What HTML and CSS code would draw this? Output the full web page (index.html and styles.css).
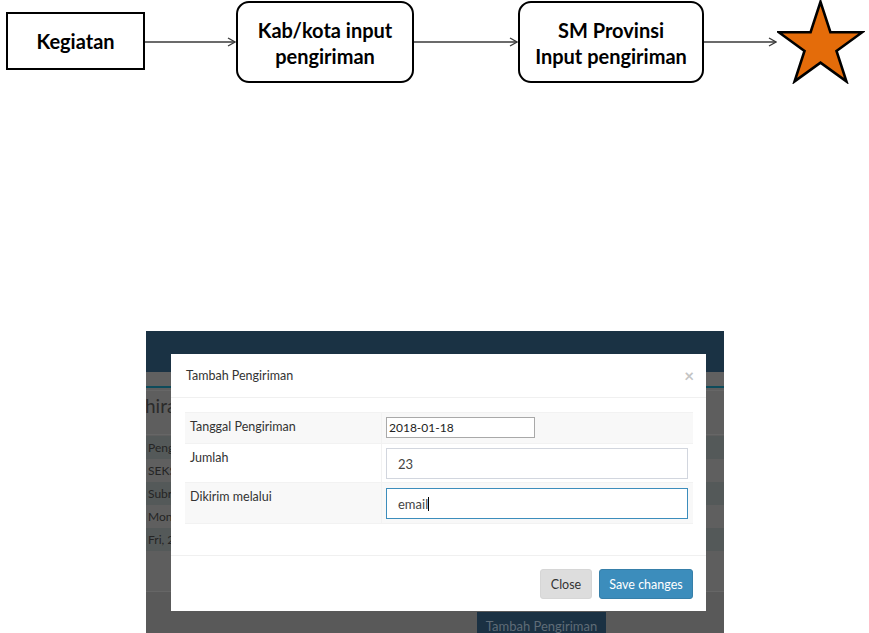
FILE: index.html
```html
<!DOCTYPE html>
<html>
<head>
<meta charset="utf-8">
<link rel="stylesheet" href="styles.css">
</head>
<body>
<div class="flow">
  <div class="box box-sq">Kegiatan</div>
  <svg class="arrow a1" width="91" height="12" viewBox="0 0 91 12"><line x1="0" y1="6" x2="90" y2="6"/><polyline points="83,2 90,6 83,10"/></svg>
  <div class="box box-rd b2">Kab/kota input<br>pengiriman</div>
  <svg class="arrow a2" width="104" height="12" viewBox="0 0 104 12"><line x1="0" y1="6" x2="103" y2="6"/><polyline points="96,2 103,6 96,10"/></svg>
  <div class="box box-rd b3">SM Provinsi<br>Input pengiriman</div>
  <svg class="arrow a3" width="73" height="12" viewBox="0 0 73 12"><line x1="0" y1="6" x2="72" y2="6"/><polyline points="65,2 72,6 65,10"/></svg>
  <svg class="star" width="88" height="84" viewBox="0 0 88 84"><polygon points="43.5,1.8 53.4,32.2 85.3,32.2 59.5,51 69.4,81.4 43.5,62.6 17.6,81.4 27.5,51 1.7,32.2 33.6,32.2"/></svg>
</div>

<div class="screen">
  <div class="navbar"></div>
  <div class="subbar"></div>
  <div class="tealline"></div>
  <div class="page-head"><span class="page-title">hiran</span></div>
  <div class="bg-table">
    <div class="bg-row odd">Peng</div>
    <div class="bg-row">SEKS</div>
    <div class="bg-row odd">Subr</div>
    <div class="bg-row">Mon,</div>
    <div class="bg-row odd">Fri, 2</div>
  </div>
  <div class="bg-spacer"></div>
  <div class="bg-actions"><span class="bg-btn">Tambah Pengiriman</span></div>

  <div class="modal">
    <div class="modal-header">
      <span class="modal-title">Tambah Pengiriman</span>
      <span class="modal-close">×</span>
    </div>
    <div class="modal-body">
      <table class="form-table">
        <tr class="r1">
          <td class="lbl">Tanggal Pengiriman</td>
          <td class="val"><input class="date-input" type="text" value="2018-01-18"></td>
        </tr>
        <tr class="r2">
          <td class="lbl">Jumlah</td>
          <td class="val"><div class="fc">23</div></td>
        </tr>
        <tr class="r3">
          <td class="lbl">Dikirim melalui</td>
          <td class="val"><div class="fc focus">email<span class="caret"></span></div></td>
        </tr>
      </table>
    </div>
    <div class="modal-footer">
      <span class="btn btn-default">Close</span>
      <span class="btn btn-primary">Save changes</span>
    </div>
  </div>
</div>
</body>
</html>
```

FILE: styles.css
```css
* { box-sizing: border-box; }
html, body { margin: 0; padding: 0; background: #fff; }
body { font-family: Lato, "Open Sans", sans-serif; width: 869px; height: 633px; overflow: hidden; }

.flow {
  display: flex;
  align-items: center;
  height: 84px;
  padding-left: 6px;
}
.box {
  display: flex;
  align-items: center;
  justify-content: center;
  text-align: center;
  font-family: Lato, sans-serif;
  font-weight: 700;
  font-size: 20px;
  line-height: 26px;
  color: #000;
  background: #fff;
  border: 2.5px solid #000;
  flex: none;
}
.box-sq { width: 139px; height: 58px; margin-top: -2px; }
.box-rd { height: 82px; border-radius: 13px; padding-top: 1px; }
.b2 { width: 178px; }
.b3 { width: 186px; }
.arrow { flex: none; display: block; }
.arrow line, .arrow polyline { stroke: #3a3a3a; stroke-width: 1.3; fill: none; }
.star { flex: none; display: block; }
.star polygon { fill: #E46C0A; stroke: #000; stroke-width: 2.6; stroke-linejoin: miter; }

.screen {
  position: relative;
  margin-left: 146px;
  margin-top: 247px;
  width: 578px;
  height: 302px;
  background: #5e5e5e;
  overflow: hidden;
}
.navbar { height: 41px; background: #1a3244; }
.subbar { height: 14px; background: #606060; }
.tealline { height: 2px; background: #0d4b5b; }
.page-head {
  height: 45px;
  padding-top: 4px;
  border-top: 1px solid #666;
  border-bottom: 1px solid #666;
  margin-top: 2px;
}
.page-title {
  display: block;
  margin-left: -1px;
  font-size: 19px;
  color: #2a2a2a;
  line-height: 22px;
}
.bg-table { margin-top: 1px; }
.bg-row {
  height: 23px;
  line-height: 23px;
  padding-left: 2px;
  font-size: 12px;
  color: #242424;
  background: #5f5f5f;
}
.bg-row.odd { background: #545959; }
.bg-spacer { height: 41px; border-bottom: 1px solid #666; }
.bg-actions {
  padding-top: 20px;
  padding-left: 331px;
  background: #595959;
  height: 60px;
}
.bg-btn {
  display: inline-block;
  width: 129px;
  height: 24px;
  line-height: 28px;
  text-align: center;
  background: #1b3143;
  color: #5f6c77;
  font-size: 13px;
}

.modal {
  position: absolute;
  left: 25px;
  top: 23px;
  width: 535px;
  height: 257px;
  background: #fff;
  color: #333;
  font-size: 12.5px;
}
.modal-header {
  height: 44px;
  padding: 0 15px;
  display: flex;
  align-items: center;
  justify-content: space-between;
  border-bottom: 1px solid #f0f0f0;
}
.modal-title { font-size: 12.5px; color: #333; }
.modal-close { color: #c4c4c4; font-size: 17px; font-weight: 700; margin-right: -3px; }
.modal-body { padding: 14px 13px 31px 14px; }
.form-table {
  width: 508px;
  border-collapse: collapse;
}
.form-table td { border-top: 1px solid #f2f2f2; vertical-align: top; }
.form-table tr.r3 td { border-bottom: 1px solid #f2f2f2; }
.r1, .r3 { background: #f8f8f8; }
.r2 { background: #fff; }
.lbl {
  width: 197px;
  padding: 6px 5px 0 5px;
  line-height: 15px;
  border-right: 1px solid #f2f2f2;
}
.r1 td { height: 31px; }
.r2 td { height: 39px; }
.r3 td { height: 41px; }
.val { padding: 4px 5px 3px 4px; }
.r3 .val { padding-top: 5px; }
.date-input {
  display: block;
  width: 149px;
  height: 21px;
  border: 1px solid #a9a9a9;
  padding: 0 2px;
  font-family: Lato, sans-serif;
  font-size: 12px;
  color: #222;
  background: #fff;
  outline: none;
  margin: 0;
}
.fc {
  width: 302px;
  height: 31px;
  border: 1px solid #d2d6de;
  background: #fff;
  padding-left: 11px;
  line-height: 29px;
  padding-top: 1px;
  font-size: 13px;
  color: #444;
}
.fc.focus { border-color: #3c8dbc; }
.caret {
  display: inline-block;
  width: 1px;
  height: 14px;
  background: #000;
  vertical-align: -2px;
}
.modal-footer {
  border-top: 1px solid #f0f0f0;
  height: 57px;
  padding: 13px 13px 0 0;
  display: flex;
  justify-content: flex-end;
  gap: 7px;
}
.btn {
  display: inline-flex;
  align-items: center;
  justify-content: center;
  height: 30px;
  border-radius: 3px;
  font-size: 12.5px;
}
.btn-default { width: 52px; background: #dddddd; color: #333; border: 1px solid #d6d6d6; }
.btn-primary { width: 94px; background: #3c8dbc; color: #fff; border: 1px solid #367fa9; }
```
